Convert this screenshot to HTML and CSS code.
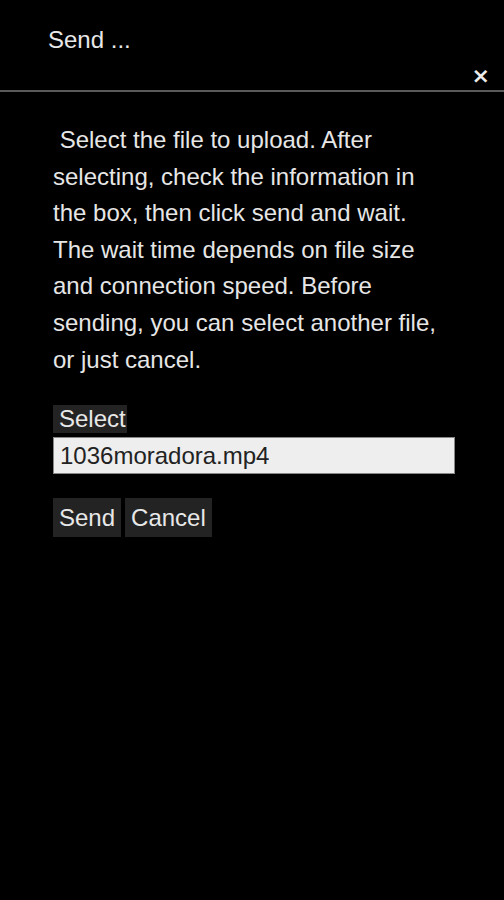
FILE: index.html
```html
<!DOCTYPE html>
<html>
<head>
<meta charset="utf-8">
<link rel="stylesheet" href="styles.css">
</head>
<body>
<header class="bar">
  <h1 class="title">Send ...</h1>
  <button class="close" aria-label="Close">×</button>
</header>
<main class="content">
  <p class="info">&nbsp;Select the file to upload. After selecting, check the information in the box, then click send and wait. The wait time depends on file size and connection speed. Before sending, you can select another file, or just cancel.</p>
  <div class="picker">
    <button class="btn btn-select">Select</button>
    <input class="file" type="text" value="1036moradora.mp4">
  </div>
  <div class="actions">
    <button class="btn btn-big">Send</button>
    <button class="btn btn-big">Cancel</button>
  </div>
</main>
</body>
</html>
```
FILE: styles.css
```css
html, body {
  margin: 0;
  background: #000;
  color: #e6e6e6;
  font-family: "Liberation Sans", Arial, sans-serif;
}
.bar {
  position: relative;
  height: 90px;
  border-bottom: 2px solid #5a5a5a;
}
.title {
  margin: 0;
  padding: 26px 0 0 48px;
  font-size: 24px;
  font-weight: normal;
  line-height: 28px;
  color: #e8e8e8;
}
.close {
  position: absolute;
  right: 14px;
  top: 64px;
  background: none;
  border: 0;
  padding: 0;
  color: #ececec;
  font-family: "DejaVu Sans", sans-serif;
  font-size: 22px;
  font-weight: bold;
  line-height: 24px;
}
.content {
  padding: 30px 0 0 53px;
  width: 402px;
}
.info {
  margin: 0;
  max-width: 392px;
  font-size: 24px;
  line-height: 36.6px;
}
.picker {
  margin-top: 27px;
  display: flex;
  flex-direction: column;
  align-items: flex-start;
  gap: 4px;
}
.btn {
  background: #232323;
  color: #e8e8e8;
  border: 0;
  font-family: "Liberation Sans", Arial, sans-serif;
  font-size: 24px;
  padding: 0 1px 0 6px;
  border-radius: 0;
}
.btn-select {
  height: 28px;
  line-height: 28px;
}
.file {
  box-sizing: border-box;
  width: 402px;
  height: 37px;
  margin: 0;
  background: #eeeeee;
  border: 1px solid #888;
  color: #222;
  font-family: "Liberation Sans", Arial, sans-serif;
  font-size: 24px;
  padding: 0 6px;
}
.actions {
  margin-top: 24px;
  display: flex;
  gap: 4px;
}
.btn-big {
  height: 39px;
  line-height: 39px;
  padding: 0 6px;
}
```
